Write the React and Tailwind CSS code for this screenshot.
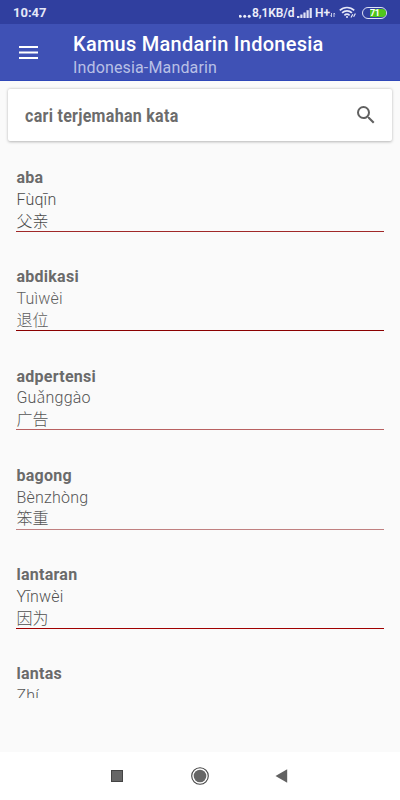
const ENTRIES = [
  { word: 'aba', pinyin: 'Fùqīn', hanzi: '父亲', text: 'text-[#4a4a4a]', line: 'bg-[#a02828]' },
  { word: 'abdikasi', pinyin: 'Tuìwèi', hanzi: '退位', text: 'text-[#606060]', line: 'bg-[#8b0000]' },
  { word: 'adpertensi', pinyin: 'Guǎnggào', hanzi: '广告', text: 'text-[#545454]', line: 'bg-[#b86060]' },
  { word: 'bagong', pinyin: 'Bènzhòng', hanzi: '笨重', text: 'text-[#545454]', line: 'bg-[#c08080]' },
  { word: 'lantaran', pinyin: 'Yīnwèi', hanzi: '因为', text: 'text-[#505050]', line: 'bg-[#a00000]' },
  { word: 'lantas', pinyin: 'Zhí', text: 'text-[#545454]' },
]

function SignalIcon() {
  return (
    <svg width="16" height="12" viewBox="0 0 16 12" fill="#dfe2f5">
      <rect x="0" y="9" width="2.4" height="2" />
      <rect x="3.3" y="7.5" width="2.2" height="3.5" />
      <rect x="6.4" y="5.5" width="2.2" height="5.5" />
      <rect x="9.5" y="3.2" width="2.2" height="7.8" />
      <rect x="12.6" y="1" width="2.2" height="10" />
    </svg>
  )
}

function WifiIcon() {
  return (
    <svg width="18" height="13" viewBox="0 0 18 13" fill="none" stroke="#e6e8f8" strokeWidth="1.7">
      <path d="M0.8 4.4a10.4 10.4 0 0 1 14.4 0" />
      <path d="M3.1 6.9a7.1 7.1 0 0 1 9.8 0" />
      <path d="M5.4 9.3a3.8 3.8 0 0 1 5.2 0" />
      <circle cx="8" cy="11" r="1" fill="#e6e8f8" stroke="none" />
      <path d="M12 11.5l1.8-3.2M14.6 10.7l1.8-3.2" strokeWidth="1.2" />
    </svg>
  )
}

function StatusBar() {
  return (
    <div className="flex h-6 shrink-0 items-center bg-[#303f9f] px-[13px] text-[#eceefa]">
      <span className="pt-px text-[13px] font-bold leading-6 text-[#e4e7f7]">10:47</span>
      <div className="ml-auto flex h-6 items-center pt-px">
        <svg width="15" height="12" viewBox="0 0 15 12" fill="#eceefa">
          <circle cx="1.2" cy="9.2" r="1.5" />
          <circle cx="5.7" cy="9.2" r="1.5" />
          <circle cx="10.2" cy="9.2" r="1.5" />
        </svg>
        <span className="-ml-[2px] w-[45px] whitespace-nowrap text-[12px] font-semibold leading-6 tracking-[-0.1px]">
          8,1KB/d
        </span>
        <SignalIcon />
        <span className="ml-[2px] w-[15px] text-[12px] font-semibold leading-6">H+</span>
        <svg className="mt-1" width="6" height="7" viewBox="0 0 6 7" stroke="#c5cae9" strokeWidth="1" fill="none">
          <path d="M1.5 2v4M0.5 4.5l1 1.2M4 6V2M4 2l1 1.2" />
        </svg>
        <div className="ml-[3px]">
          <WifiIcon />
        </div>
        <div className="ml-[5px] flex h-3 w-[25px] rounded-full border border-[#dfe2f5] p-px">
          <div className="ml-[6px] flex-1 rounded-r-full bg-[#4fc51b] pr-[6px] text-center text-[9px] font-bold leading-2 tracking-[-0.4px] text-white">
            71
          </div>
        </div>
      </div>
    </div>
  )
}

function AppBar() {
  return (
    <header className="flex h-[57px] shrink-0 items-start border-b border-[#2f47b8] bg-[#3f51b5] pl-[19px]">
      <svg className="mt-[22px]" width="19" height="14" viewBox="0 0 19 14" fill="#fff">
        <rect y="0" width="19" height="2" />
        <rect y="5.5" width="19" height="2" />
        <rect y="11" width="19" height="2" />
      </svg>
      <div className="ml-[35px] mt-2">
        <h1 className="text-[20px] font-medium leading-6 tracking-[0.26px] text-white">Kamus Mandarin Indonesia</h1>
        <p className="text-[16px] leading-6 tracking-[0.15px] text-[#b9c0e6]">Indonesia-Mandarin</p>
      </div>
    </header>
  )
}

function SearchBox() {
  return (
    <div className="mx-2 mt-2 flex h-[52px] shrink-0 items-center rounded-[2px] bg-white pl-[17px] pr-[14px] shadow-[0_0.5px_3px_rgba(0,0,0,0.28)]">
      <span className="origin-left scale-x-[0.89] whitespace-nowrap text-[18px] font-bold tracking-[0.32px] text-[#6c6c6c]">
        cari terjemahan kata
      </span>
      <svg className="ml-auto" width="24" height="24" viewBox="0 0 24 24" fill="#616161">
        <path d="M15.5 14h-.79l-.28-.27A6.47 6.47 0 0 0 16 9.5 6.5 6.5 0 1 0 9.5 16c1.61 0 3.09-.59 4.23-1.57l.27.28v.79l5 4.99L20.49 19l-4.99-5zm-6 0C7.01 14 5 11.99 5 9.5S7.01 5 9.5 5 14 7.01 14 9.5 11.99 14 9.5 14z" />
      </svg>
    </div>
  )
}

function Entry({ entry }) {
  return (
    <li className="h-[99.25px] pt-[1.4px] text-[16px] leading-[21.75px]">
      <p className="pl-[0.4px] font-bold tracking-[0.27px] text-[#6a6a6a]">{entry.word}</p>
      <p className={`pl-[0.4px] font-light tracking-[0.22px] ${entry.text}`}>{entry.pinyin}</p>
      {entry.hanzi && (
        <>
          <p
            className={`h-[20.35px] pl-[0.4px] font-['Noto_Sans_CJK_SC',sans-serif] font-light leading-[19px] ${entry.text}`}
            lang="zh-CN"
          >
            {entry.hanzi}
          </p>
          <div className={`h-px ${entry.line}`} />
        </>
      )}
    </li>
  )
}

export default function App() {
  return (
    <div className="flex h-[800px] w-[400px] flex-col overflow-hidden bg-[#fafafa] font-[Roboto,'Noto_Sans_CJK_SC',sans-serif]">
      <StatusBar />
      <AppBar />
      <SearchBox />
      <ul className="mx-4 mt-[24.7px] h-[532px] shrink-0 overflow-hidden">
        {ENTRIES.map((entry) => (
          <Entry key={entry.word} entry={entry} />
        ))}
      </ul>
      <nav className="mt-auto flex h-12 shrink-0 items-center bg-white pl-[111px]">
        <div className="h-3 w-3 border border-[#444] bg-[#666]" />
        <svg className="ml-[68px]" width="18" height="18" viewBox="0 0 18 18">
          <circle cx="9" cy="9" r="8.3" fill="none" stroke="#444" strokeWidth="1.1" />
          <circle cx="9" cy="9" r="6.3" fill="#666" />
        </svg>
        <svg className="ml-[66px]" width="13" height="14" viewBox="0 0 13 14" fill="#616161">
          <path d="M0.5 7L12.2 0.2v13.6z" />
        </svg>
      </nav>
    </div>
  )
}
